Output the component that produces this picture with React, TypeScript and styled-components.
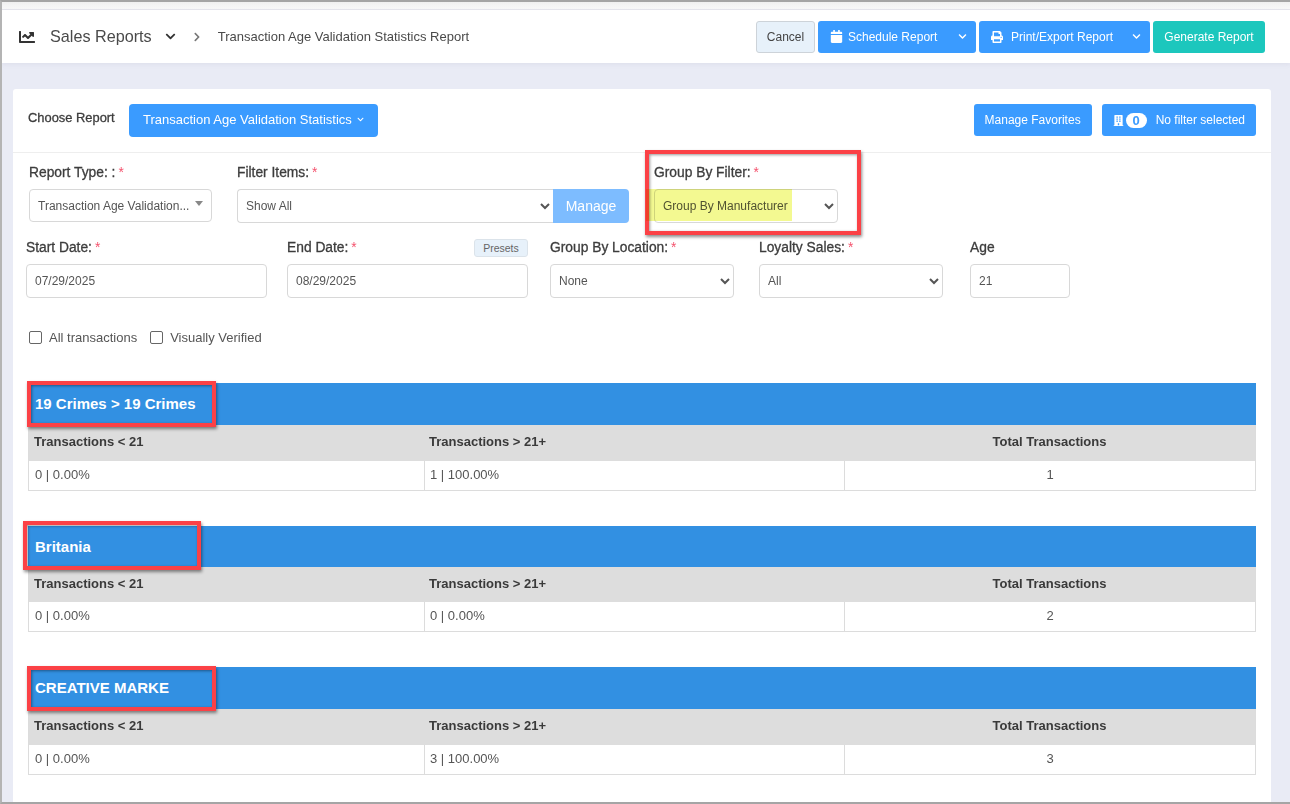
import styled, { createGlobalStyle } from 'styled-components';
import { FaBuilding, FaCalendar, FaChartLine, FaChevronDown, FaChevronRight, FaPrint } from 'react-icons/fa';

const GlobalStyle = createGlobalStyle`
  html, body {
    margin: 0;
    padding: 0;
    height: 804px;
    overflow: hidden;
    background: #e9ebf5;
  }
  * {
    box-sizing: border-box;
  }
  body, select, input, button {
    font-family: "Liberation Sans", Arial, sans-serif;
  }
`;

const Frame = styled.div`
  width: 1290px;
  height: 804px;
  overflow: hidden;
  border-top: 2px solid #a5a5a5;
  border-left: 2px solid #b4b4b4;
  border-bottom: 2px solid #a5a5a5;
  background: #e9ebf5;
`;

const TopStrip = styled.div`
  height: 8px;
  background: linear-gradient(#f0f0f0, #fafafa);
  border-bottom: 1px solid #e8e8ee;
`;

const TopBar = styled.header`
  height: 53px;
  background: #fff;
  display: flex;
  align-items: center;
  padding: 0 25px 0 17px;
  box-shadow: 0 1px 5px rgba(120, 125, 160, 0.12);
`;

const Crumbs = styled.div`
  display: flex;
  align-items: center;
  flex: 1;
  color: #444;
`;

const ModuleName = styled.span`
  font-size: 16.2px;
  color: #4a4a4a;
  margin-left: 15px;
`;

const CrumbChevron = styled.span`
  display: inline-flex;
  color: #333;
  margin-left: 13px;
`;

const CrumbArrow = styled.span`
  display: inline-flex;
  color: #777;
  margin: 0 16px 0 16px;
`;

const PageName = styled.span`
  font-size: 13px;
  color: #4a4a4a;
`;

const Actions = styled.div`
  display: flex;
  gap: 3px;
`;

const Button = styled.button<{ $kind?: 'blue' | 'teal' | 'plain' }>`
  height: 32px;
  border-radius: 3px;
  font-size: 12px;
  padding: 0 10px;
  display: inline-flex;
  align-items: center;
  white-space: nowrap;
  cursor: pointer;
  color: ${(p) => (p.$kind === 'plain' ? '#444' : '#fff')};
  background: ${(p) => (p.$kind === 'plain' ? '#e7f1fa' : p.$kind === 'teal' ? '#1cc7bd' : '#3a9bff')};
  border: 1px solid ${(p) => (p.$kind === 'plain' ? '#cdd3d9' : 'transparent')};
`;

const CancelButton = styled(Button)`
  width: 59px;
  padding: 0;
  justify-content: center;
`;

const GenerateButton = styled(Button)`
  width: 112px;
  padding: 0;
  justify-content: center;
`;

const SplitButton = styled(Button)<{ $width: number; $gap: number }>`
  width: ${(p) => p.$width}px;
  padding: 0 0 0 11px;
  gap: ${(p) => p.$gap}px;
`;

const SplitLabel = styled.span`
  flex: 1;
  text-align: left;
`;

const SplitCaret = styled.span`
  display: inline-flex;
  width: 26px;
  height: 100%;
  align-items: center;
  justify-content: center;
`;

const Card = styled.main`
  margin: 26px 19px 0 11px;
  height: 720px;
  background: #fff;
  border-radius: 3px 3px 0 0;
`;

const ChooseRow = styled.div`
  height: 64px;
  border-bottom: 1px solid #eee;
  display: flex;
  align-items: flex-start;
  padding: 15px 15px 0 15px;
`;

const ChooseLabel = styled.span`
  font-size: 12.9px;
  color: #3d3d3d;
  -webkit-text-stroke: 0.3px #3d3d3d;
  line-height: 28px;
  width: 101px;
`;

const ChooseButton = styled(Button)`
  height: 33px;
  font-size: 13px;
  padding: 0 13px 2px 13px;
  gap: 5px;
  border-radius: 4px;
`;

const RightActions = styled.div`
  margin-left: auto;
  display: flex;
  gap: 10px;
`;

const Count = styled.span`
  background: #fff;
  color: #3a9bff;
  font-weight: 700;
  font-size: 13px;
  border-radius: 10px;
  width: 21px;
  height: 15px;
  line-height: 15px;
  text-align: center;
  margin: 0 9px 0 2px;
`;

const FieldRow = styled.div<{ $top: number; $left: number; $height: number }>`
  display: flex;
  align-items: flex-start;
  margin-top: ${(p) => p.$top}px;
  padding-left: ${(p) => p.$left}px;
  height: ${(p) => p.$height}px;
`;

const Field = styled.div<{ $width: number; $gap?: number }>`
  position: relative;
  width: ${(p) => p.$width}px;
  margin-right: ${(p) => p.$gap ?? 0}px;
`;

const Label = styled.label`
  display: block;
  font-size: 13.8px;
  line-height: 16px;
  height: 24px;
  white-space: nowrap;
  color: #3d3d3d;
  -webkit-text-stroke: 0.3px #3d3d3d;
`;

const Star = styled.span`
  color: #f4516c;
  -webkit-text-stroke: 0;
  margin-left: 3px;
`;

const controlStyle = `
  width: 100%;
  height: 34px;
  border: 1px solid #d8d8d8;
  border-radius: 4px;
  background: #fff;
  font-size: 12px;
  color: #555;
  padding: 0 8px;
  outline: none;
`;

const Select = styled.select`
  ${controlStyle}
  padding: 0 4px;
`;

const Input = styled.input`
  ${controlStyle}
`;

const FakeSelect = styled.div`
  ${controlStyle}
  height: 33px;
  display: flex;
  align-items: center;
  justify-content: space-between;
`;

const Triangle = styled.span`
  width: 0;
  height: 0;
  border-left: 4px solid transparent;
  border-right: 4px solid transparent;
  border-top: 5px solid #888;
  margin-top: -4px;
`;

const InputGroup = styled.div`
  display: flex;
`;

const GroupSelect = styled(Select)`
  border-radius: 4px 0 0 4px;
  border-right: 0;
  flex: 1;
  min-width: 0;
`;

const ManageButton = styled.button`
  width: 76px;
  height: 34px;
  border: 0;
  border-radius: 0 4px 4px 0;
  background: #7dbcff;
  color: #fff;
  font-size: 14px;
`;

const Presets = styled.button`
  position: absolute;
  top: -1px;
  right: 0;
  height: 18px;
  width: 54px;
  padding: 0;
  border: 1px solid #dbe3ea;
  border-radius: 3px;
  background: #e7f1fa;
  color: #666;
  font-size: 10.5px;
`;

const Highlight = styled.div<{ $top: number; $left: number; $width: number; $height: number }>`
  position: absolute;
  top: ${(p) => p.$top}px;
  left: ${(p) => p.$left}px;
  width: ${(p) => p.$width}px;
  height: ${(p) => p.$height}px;
  border: 4px solid #fb4146;
  box-shadow: 1px 2px 3px rgba(0, 0, 0, 0.45), inset 1px 1px 3px rgba(0, 0, 0, 0.4);
  pointer-events: none;
`;

// marker stroke drawn over the select and the left edge of the red box
const Marker = styled.div`
  position: absolute;
  top: 24px;
  left: -8px;
  width: 146px;
  height: 32px;
  background: #f3f991;
  mix-blend-mode: multiply;
  pointer-events: none;
`;

const Checks = styled.div`
  display: flex;
  margin: 17px 0 0 16px;
  gap: 13px;
`;

const CheckLabel = styled.label`
  display: flex;
  align-items: center;
  gap: 7px;
  font-size: 13px;
  color: #555;
`;

const CheckBox = styled.input`
  appearance: none;
  width: 13px;
  height: 13px;
  margin: 0;
  border: 1px solid #666;
  border-radius: 2px;
  background: #fff;
`;

const Groups = styled.div`
  margin: 38px 15px 0 15px;
  display: flex;
  flex-direction: column;
  gap: 35px;
`;

const GroupTable = styled.section`
  border: 1px solid #dcdcdc;
  border-top: 0;
`;

const GroupTitle = styled.h3<{ $compact?: boolean }>`
  position: relative;
  margin: 0 -1px;
  height: ${(p) => (p.$compact ? 41 : 42)}px;
  background: #3290e2;
  color: #fff;
  font-size: 15px;
  font-weight: 700;
  line-height: ${(p) => (p.$compact ? 41 : 42)}px;
  padding-left: 7px;
`;

const Row = styled.div<{ $head?: boolean; $compact?: boolean }>`
  display: grid;
  grid-template-columns: 395px 420px 1fr;
  height: ${(p) => (p.$head ? (p.$compact ? 35 : 36) : 29)}px;
  background: ${(p) => (p.$head ? '#dddddd' : '#fff')};
`;

const Cell = styled.div<{ $head?: boolean; $center?: boolean; $line?: boolean }>`
  font-size: 13px;
  font-weight: ${(p) => (p.$head ? 700 : 400)};
  color: ${(p) => (p.$head ? '#3a3a3a' : '#555')};
  text-align: ${(p) => (p.$center ? 'center' : 'left')};
  padding-top: ${(p) => (p.$head ? 9 : 6)}px;
  padding-left: ${(p) => (p.$center ? 0 : p.$head || p.$line ? 5 : 6)}px;
  border-left: ${(p) => (p.$line ? '1px solid #dcdcdc' : '0')};
`;

const groups = [
  { title: '19 Crimes > 19 Crimes', low: '0 | 0.00%', high: '1 | 100.00%', total: 1, compact: false, box: { top: -2, left: -1, width: 189, height: 46 } },
  { title: 'Britania', low: '0 | 0.00%', high: '0 | 0.00%', total: 2, compact: true, box: { top: -5, left: -5, width: 178, height: 49 } },
  { title: 'CREATIVE MARKE', low: '0 | 0.00%', high: '3 | 100.00%', total: 3, compact: false, box: { top: -1, left: -1, width: 189, height: 45 } },
];

export default function App() {
  return (
    <Frame>
      <GlobalStyle />
      <TopStrip />
      <TopBar>
        <Crumbs>
          <FaChartLine size={16} color="#333" />
          <ModuleName>Sales Reports</ModuleName>
          <CrumbChevron><FaChevronDown size={11} /></CrumbChevron>
          <CrumbArrow><FaChevronRight size={10} /></CrumbArrow>
          <PageName>Transaction Age Validation Statistics Report</PageName>
        </Crumbs>
        <Actions>
          <CancelButton $kind="plain">Cancel</CancelButton>
          <SplitButton $width={158} $gap={5}>
            <FaCalendar size={13} />
            <SplitLabel>Schedule Report</SplitLabel>
            <SplitCaret><FaChevronDown size={9} /></SplitCaret>
          </SplitButton>
          <SplitButton $width={171} $gap={8}>
            <FaPrint size={12} />
            <SplitLabel>Print/Export Report</SplitLabel>
            <SplitCaret><FaChevronDown size={9} /></SplitCaret>
          </SplitButton>
          <GenerateButton $kind="teal">Generate Report</GenerateButton>
        </Actions>
      </TopBar>
      <Card>
        <ChooseRow>
          <ChooseLabel>Choose Report</ChooseLabel>
          <ChooseButton>
            Transaction Age Validation Statistics
            <FaChevronDown size={7} />
          </ChooseButton>
          <RightActions>
            <Button>Manage Favorites</Button>
            <Button>
              <FaBuilding size={11} />
              <Count>0</Count>
              No filter selected
            </Button>
          </RightActions>
        </ChooseRow>
        <FieldRow $top={12} $left={16} $height={75}>
          <Field $width={183} $gap={25}>
            <Label>Report Type: :<Star>*</Star></Label>
            <FakeSelect>
              Transaction Age Validation...
              <Triangle />
            </FakeSelect>
          </Field>
          <Field $width={392} $gap={25}>
            <Label>Filter Items:<Star>*</Star></Label>
            <InputGroup>
              <GroupSelect defaultValue="all">
                <option value="all">Show All</option>
              </GroupSelect>
              <ManageButton>Manage</ManageButton>
            </InputGroup>
          </Field>
          <Field $width={184}>
            <Label>Group By Filter:<Star>*</Star></Label>
            <Select defaultValue="m">
              <option value="m">Group By Manufacturer</option>
            </Select>
            <Highlight $top={-15} $left={-9} $width={216} $height={85} />
            <Marker />
          </Field>
        </FieldRow>
        <FieldRow $top={0} $left={13} $height={73}>
          <Field $width={241} $gap={20}>
            <Label>Start Date:<Star>*</Star></Label>
            <Input defaultValue="07/29/2025" />
          </Field>
          <Field $width={241} $gap={22}>
            <Label>End Date:<Star>*</Star></Label>
            <Presets>Presets</Presets>
            <Input defaultValue="08/29/2025" />
          </Field>
          <Field $width={184} $gap={25}>
            <Label>Group By Location:<Star>*</Star></Label>
            <Select defaultValue="n"><option value="n">None</option></Select>
          </Field>
          <Field $width={184} $gap={27}>
            <Label>Loyalty Sales:<Star>*</Star></Label>
            <Select defaultValue="a"><option value="a">All</option></Select>
          </Field>
          <Field $width={100}>
            <Label>Age</Label>
            <Input defaultValue="21" />
          </Field>
        </FieldRow>
        <Checks>
          <CheckLabel><CheckBox type="checkbox" />All transactions</CheckLabel>
          <CheckLabel><CheckBox type="checkbox" />Visually Verified</CheckLabel>
        </Checks>
        <Groups>
          {groups.map((g) => (
            <GroupTable key={g.title}>
              <GroupTitle $compact={g.compact}>
                {g.title}
                <Highlight $top={g.box.top} $left={g.box.left} $width={g.box.width} $height={g.box.height} />
              </GroupTitle>
              <Row $head $compact={g.compact}>
                <Cell $head>Transactions &lt; 21</Cell>
                <Cell $head>Transactions &gt; 21+</Cell>
                <Cell $head $center>Total Transactions</Cell>
              </Row>
              <Row>
                <Cell>{g.low}</Cell>
                <Cell $line>{g.high}</Cell>
                <Cell $line $center>{g.total}</Cell>
              </Row>
            </GroupTable>
          ))}
        </Groups>
      </Card>
    </Frame>
  );
}
